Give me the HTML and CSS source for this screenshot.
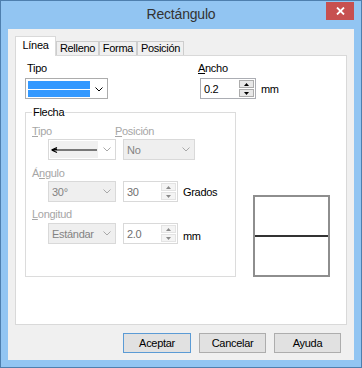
FILE: index.html
```html
<!DOCTYPE html>
<html lang="es">

<head>
  <meta charset="UTF-8" />
  <meta name="viewport" content="width=device-width, initial-scale=1.0" />
  <title>Rectángulo</title>
  <link rel="stylesheet" href="styles.css">
</head>

<body>
  <div class="window">
    <div class="titlebar">
      <h1 class="title">Rectángulo</h1>
      <div class="close">
        <svg width="9" height="8" viewBox="0 0 9 8"><path d="M1 0.5 L8 7.5 M8 0.5 L1 7.5" stroke="#fff" stroke-width="1.8" fill="none" /></svg>
      </div>
    </div>

    <div class="client">
      <div class="tabs">
        <div class="tab active">Línea</div>
        <div class="tab tab-relleno">Relleno</div>
        <div class="tab tab-forma">Forma</div>
        <div class="tab tab-posicion">Posición</div>
      </div>

      <div class="page">
        <div class="top-row">
          <div class="field field-tipo">
            <span class="label">Tipo</span>
            <div class="combo line-combo">
              <div class="line-sel"><span class="line-white"></span></div>
              <div class="chevron">
                <svg width="8" height="5" viewBox="0 0 8 5"><path d="M0.5 0.5 L4 4 L7.5 0.5" stroke="#000" fill="none" /></svg>
              </div>
            </div>
          </div>
          <div class="field">
            <span class="label label-ancho"><u>A</u>ncho</span>
            <div class="spin-row">
              <div class="spin">
                <span class="value">0.2</span>
                <div class="spin-btns">
                  <span class="spin-btn"><svg width="5" height="3" viewBox="0 0 5 3"><path d="M2.5 0 L5 3 L0 3 Z" fill="#000" /></svg></span>
                  <span class="spin-btn"><svg width="5" height="3" viewBox="0 0 5 3"><path d="M0 0 L5 0 L2.5 3 Z" fill="#000" /></svg></span>
                </div>
              </div>
              <span class="unit">mm</span>
            </div>
          </div>
        </div>

        <div class="bottom-row">
          <fieldset class="group">
            <legend>Flecha</legend>

            <div class="row-labels">
              <span class="label dim label-col1"><u>T</u>ipo</span>
              <span class="label dim"><u>P</u>osición</span>
            </div>
            <div class="ctrl-row row-b">
              <div class="combo arrow-combo">
                <div class="arrow-sel">
                  <svg width="48" height="14" viewBox="0 0 48 14"><path d="M1.5 7 L47 7 M1.5 7 L7 4.5 M1.5 7 L7 9.5 M4 7 L7 6" stroke="#000" stroke-width="1.2" fill="none" /></svg>
                </div>
                <div class="chevron">
                  <svg width="8" height="5" viewBox="0 0 8 5"><path d="M0.5 0.5 L4 4 L7.5 0.5" stroke="#a8a8a8" fill="none" /></svg>
                </div>
              </div>
              <div class="combo disabled pos-combo">
                <span class="combo-text">No</span>
                <div class="chevron">
                  <svg width="8" height="5" viewBox="0 0 8 5"><path d="M0.5 0.5 L4 4 L7.5 0.5" stroke="#a8a8a8" fill="none" /></svg>
                </div>
              </div>
            </div>

            <span class="label dim row-c">Á<u>n</u>gulo</span>
            <div class="ctrl-row row-d">
              <div class="combo disabled">
                <span class="combo-text">30°</span>
                <div class="chevron">
                  <svg width="8" height="5" viewBox="0 0 8 5"><path d="M0.5 0.5 L4 4 L7.5 0.5" stroke="#a8a8a8" fill="none" /></svg>
                </div>
              </div>
              <div class="spin disabled">
                <span class="value">30</span>
                <div class="spin-btns">
                  <span class="spin-btn"><svg width="5" height="3" viewBox="0 0 5 3"><path d="M2.5 0 L5 3 L0 3 Z" fill="#8a8a8a" /></svg></span>
                  <span class="spin-btn"><svg width="5" height="3" viewBox="0 0 5 3"><path d="M0 0 L5 0 L2.5 3 Z" fill="#8a8a8a" /></svg></span>
                </div>
              </div>
              <span class="unit">Grados</span>
            </div>

            <span class="label dim row-e"><u>L</u>ongitud</span>
            <div class="ctrl-row row-f">
              <div class="combo disabled">
                <span class="combo-text">Estándar</span>
                <div class="chevron">
                  <svg width="8" height="5" viewBox="0 0 8 5"><path d="M0.5 0.5 L4 4 L7.5 0.5" stroke="#a8a8a8" fill="none" /></svg>
                </div>
              </div>
              <div class="spin disabled">
                <span class="value">2.0</span>
                <div class="spin-btns">
                  <span class="spin-btn"><svg width="5" height="3" viewBox="0 0 5 3"><path d="M2.5 0 L5 3 L0 3 Z" fill="#8a8a8a" /></svg></span>
                  <span class="spin-btn"><svg width="5" height="3" viewBox="0 0 5 3"><path d="M0 0 L5 0 L2.5 3 Z" fill="#8a8a8a" /></svg></span>
                </div>
              </div>
              <span class="unit unit-mm">mm</span>
            </div>
          </fieldset>

          <div class="preview"><span class="preview-line"></span></div>
        </div>
      </div>

      <div class="buttons">
        <button class="btn btn-default">Aceptar</button>
        <button class="btn">Cancelar</button>
        <button class="btn">Ayuda</button>
      </div>
    </div>
  </div>
</body>

</html>
```

FILE: styles.css
```css
body {
  margin: 0;
  font-family: "Liberation Sans", Arial, sans-serif;
  font-size: 11px;
  letter-spacing: -0.3px;
  color: #000;
}

/* ventana */
.window {
  width: 362px;
  height: 368px;
  box-sizing: border-box;
  border: 1px solid #4e7fae;
  background-color: #92c5f2;
  padding: 0 7px 7px;
  display: flex;
  flex-direction: column;
}

.titlebar {
  height: 28px;
  display: grid;
  grid-template-columns: 1fr auto 1fr;
  align-items: start;
}

.title {
  grid-column: 2;
  margin: 0;
  font-size: 14px;
  font-weight: normal;
  letter-spacing: -0.2px;
  line-height: 26px;
  color: #333;
}

.close {
  grid-column: 3;
  justify-self: end;
  width: 28px;
  height: 18px;
  margin-top: 1px;
  background-color: #c75050;
  display: flex;
  align-items: center;
  justify-content: center;
}

.client {
  flex: 1;
  background-color: #f0f0f0;
  padding: 7px 7px 6px;
  display: flex;
  flex-direction: column;
}

/* pestañas */
.tabs {
  display: flex;
  align-items: flex-end;
  height: 20px;
  margin-bottom: -1px;
  position: relative;
  z-index: 1;
}

.tab {
  box-sizing: border-box;
  height: 14px;
  margin-bottom: 1px;
  border: 1px solid #cdcdcd;
  border-bottom: none;
  background-color: #f0f0f0;
  line-height: 13px;
  text-align: center;
}

.tab.active {
  width: 41px;
  height: 20px;
  margin-bottom: 0;
  background-color: #fff;
  border-color: #d9d9d9;
  line-height: 16px;
}

.tab-relleno {
  width: 43px;
}

.tab-forma {
  width: 38px;
}

.tab-posicion {
  width: 47px;
}

.page {
  height: 270px;
  box-sizing: border-box;
  background-color: #fff;
  border: 1px solid #d9d9d9;
  padding: 5px 0 0 9px;
}

.top-row {
  display: flex;
}

.field-tipo {
  width: 173px;
}

.label {
  display: block;
  height: 14px;
  line-height: 14px;
  margin-bottom: 3px;
  padding-left: 2px;
}

.label-ancho {
  padding-left: 0;
}

.label.dim {
  color: #a6a6a6;
  padding-left: 0;
  margin-bottom: 0;
}

/* combos */
.combo {
  box-sizing: border-box;
  width: 68px;
  height: 21px;
  border: 1px solid #acacac;
  background-color: #fff;
  display: flex;
  align-items: center;
}

.combo .chevron {
  flex: 1;
  display: flex;
  justify-content: center;
  align-items: center;
}

.line-combo {
  width: 83px;
  padding: 2px 0 1px 2px;
  align-items: stretch;
}

.line-sel {
  width: 62px;
  background-color: #3399ff;
  display: flex;
  align-items: center;
}

.line-white {
  display: block;
  width: 100%;
  height: 1px;
  background-color: #fff;
}

.combo.disabled {
  background-color: #efefef;
  border-color: #d9d9d9;
  color: #838383;
}

.combo-text {
  padding-left: 3px;
  width: 46px;
}

.pos-combo {
  width: 72px;
}

.pos-combo .combo-text {
  width: 50px;
}

.arrow-combo {
  border-color: #d9d9d9;
  padding: 1px 0 1px 1px;
  align-items: stretch;
}

.arrow-sel {
  width: 48px;
  background-color: #f0f0f0;
  display: flex;
  align-items: center;
}

.arrow-sel svg {
  display: block;
}

/* spin */
.spin-row {
  display: flex;
  align-items: center;
  gap: 5px;
  margin-left: 2px;
}

.spin {
  box-sizing: border-box;
  width: 56px;
  height: 21px;
  border: 1px solid #abadb3;
  background-color: #fff;
  display: flex;
  align-items: center;
  padding: 1px;
}

.spin .value {
  flex: 1;
  padding-left: 2px;
}

.spin-btns {
  width: 15px;
  height: 100%;
  display: flex;
  flex-direction: column;
  gap: 1px;
}

.spin-btn {
  flex: 1;
  box-sizing: border-box;
  border: 1px solid #acacac;
  background-color: #e8e8e8;
  display: flex;
  align-items: center;
  justify-content: center;
}

.spin-btn svg {
  display: block;
}

.spin.disabled {
  width: 55px;
  border-color: #d9d9d9;
  color: #6f6f6f;
}

.spin.disabled .spin-btn {
  border-color: #e3e3e3;
  background-color: #f4f4f4;
}

/* grupo flecha */
.bottom-row {
  display: flex;
  align-items: flex-end;
  margin-top: 6px;
}

.group {
  width: 211px;
  box-sizing: border-box;
  margin: 0;
  padding: 5px 0 32px 6px;
  border: 1px solid #dcdcdc;
}

.group legend {
  padding: 0 1px;
  line-height: 14px;
  color: #000;
}

.row-labels {
  display: flex;
}

.label-col1 {
  width: 83px;
}

.ctrl-row {
  display: flex;
  align-items: center;
  gap: 7px;
  height: 21px;
  padding-left: 16px;
}

.row-b,
.row-d {
  margin-top: 1px;
}

.row-c {
  margin-top: 6px;
}

.row-e {
  margin-top: 5px;
}

.row-f {
  margin-top: 2px;
}

.ctrl-row .unit {
  margin-left: -2px;
}

.unit-mm {
  padding-top: 4px;
}

.preview {
  width: 77px;
  height: 82px;
  box-sizing: border-box;
  margin-left: 17px;
  border: 2px solid #8e8e8e;
  display: flex;
  align-items: center;
}

.preview-line {
  display: block;
  width: 100%;
  height: 2px;
  background-color: #333;
}

/* botones */
.buttons {
  display: flex;
  justify-content: flex-end;
  gap: 8px;
  margin-top: 8px;
  padding-right: 6px;
}

.btn {
  width: 67px;
  height: 20px;
  padding: 0;
  border: 1px solid #adadad;
  background-color: #e1e1e1;
  font-family: "Liberation Sans", Arial, sans-serif;
  font-size: 11px;
  letter-spacing: -0.3px;
  color: #000;
}

.btn-default {
  width: 68px;
  border-color: #5b9bd5;
}
```
